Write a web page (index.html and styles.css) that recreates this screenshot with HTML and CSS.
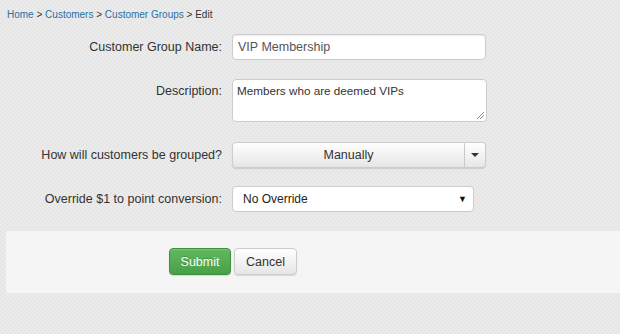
FILE: index.html
```html
<!DOCTYPE html>
<html>
<head>
<meta charset="utf-8">
<link rel="stylesheet" href="styles.css">
</head>
<body>
<div class="page">
  <div class="crumbs"><a href="#">Home</a> &gt; <a href="#">Customers</a> &gt; <a href="#">Customer Groups</a> &gt; Edit</div>
  <form class="form">
    <div class="row r-name">
      <label class="lbl">Customer Group Name:</label>
      <div class="ctl"><div class="input">VIP Membership</div></div>
    </div>
    <div class="row top r-desc">
      <label class="lbl lbl-top">Description:</label>
      <div class="ctl"><div class="textarea">Members who are deemed VIPs<span class="grip"></span></div></div>
    </div>
    <div class="row r-group">
      <label class="lbl">How will customers be grouped?</label>
      <div class="ctl">
        <div class="btngroup">
          <div class="btn main">Manually</div>
          <div class="btn caretbtn"><span class="caret"></span></div>
        </div>
      </div>
    </div>
    <div class="row r-override">
      <label class="lbl">Override $1 to point conversion:</label>
      <div class="ctl"><div class="select"><span>No Override</span><span class="arrow">&#9660;</span></div></div>
    </div>
  </form>
  <div class="footer">
    <div class="btn submit">Submit</div>
    <div class="btn cancel">Cancel</div>
  </div>
</div>
</body>
</html>
```
FILE: styles.css
```css
html, body {
  margin: 0;
  padding: 0;
}
body {
  background-color: #e8e8e8;
  background-image: repeating-conic-gradient(#e6e6e6 0 25%, #ebebeb 0 50%);
  background-size: 4px 4px;
  font-family: "Liberation Sans", Arial, sans-serif;
  color: #333;
  width: 620px;
  height: 334px;
  overflow: hidden;
}
.page {
  padding: 9px 0 0 6px;
}
.crumbs {
  font-size: 10px;
  line-height: 12px;
  padding-left: 1px;
  color: #333;
}
.crumbs a {
  color: #2a6fa8;
  text-decoration: none;
}
.form {
  margin-top: 13px;
}
.row {
  display: flex;
  align-items: center;
}
.r-name { margin-bottom: 19px; }
.r-desc { margin-bottom: 20px; }
.r-group { margin-bottom: 18px; }
.r-override { margin-bottom: 19px; }
.row.top {
  align-items: flex-start;
}
.lbl {
  width: 216px;
  text-align: right;
  font-size: 12.5px;
  color: #333;
  flex: none;
}
.lbl-top {
  padding-top: 5px;
}
.ctl {
  margin-left: 10px;
}
.input {
  width: 242px;
  height: 24px;
  box-sizing: content-box;
  padding: 0 5px;
  border: 1px solid #ccc;
  border-radius: 4px;
  background: #fff;
  font-size: 12.5px;
  line-height: 24px;
  color: #555;
  box-shadow: inset 0 1px 1px rgba(0,0,0,0.075);
}
.textarea {
  position: relative;
  width: 246px;
  height: 35px;
  padding: 3px 3px 3px 4px;
  border: 1px solid #ccc;
  border-radius: 4px;
  background: #fff;
  font-size: 11.7px;
  line-height: 15px;
  color: #333;
}
.grip {
  position: absolute;
  right: 2px;
  bottom: 2px;
  width: 7px;
  height: 7px;
  background: linear-gradient(135deg, transparent 0 45%, #888 45% 52%, transparent 52% 70%, #888 70% 77%, transparent 77%);
}
.btngroup {
  display: flex;
  width: 254px;
  height: 26px;
}
.btn {
  box-sizing: border-box;
  border: 1px solid #ccc;
  border-radius: 4px;
  background: linear-gradient(#fff, #e6e6e6);
  box-shadow: 0 1px 1px rgba(0,0,0,0.12), inset 0 1px 0 rgba(255,255,255,0.15);
  font-size: 12px;
  color: #333;
  display: flex;
  align-items: center;
  justify-content: center;
}
.btngroup .main {
  flex: 1;
  border-radius: 4px 0 0 4px;
  font-size: 12.5px;
}
.btngroup .caretbtn {
  width: 21px;
  border-left: 0;
  border-radius: 0 4px 4px 0;
}
.caret {
  width: 0;
  height: 0;
  border-left: 4px solid transparent;
  border-right: 4px solid transparent;
  border-top: 4px solid #333;
}
.select {
  width: 242px;
  height: 26px;
  box-sizing: border-box;
  border: 1px solid #ccc;
  border-radius: 4px;
  background: #fff;
  display: flex;
  align-items: center;
  justify-content: space-between;
  padding: 0 6px 0 10px;
  font-size: 12px;
  color: #222;
}
.select .arrow {
  font-size: 9px;
  color: #111;
}
.footer {
  margin-top: 3px;
  background: #f5f5f5;
  height: 62px;
  box-sizing: border-box;
  padding: 17px 0 0 163px;
  display: flex;
  align-items: flex-start;
  gap: 3px;
}
.footer .btn {
  height: 27px;
  font-size: 12.5px;
}
.submit {
  width: 62px;
  background: linear-gradient(#5fba5f, #47a047);
  border-color: #3e8f3e;
  color: #fff;
  text-shadow: 0 -1px 0 rgba(0,0,0,0.2);
}
.cancel {
  width: 63px;
}
```
